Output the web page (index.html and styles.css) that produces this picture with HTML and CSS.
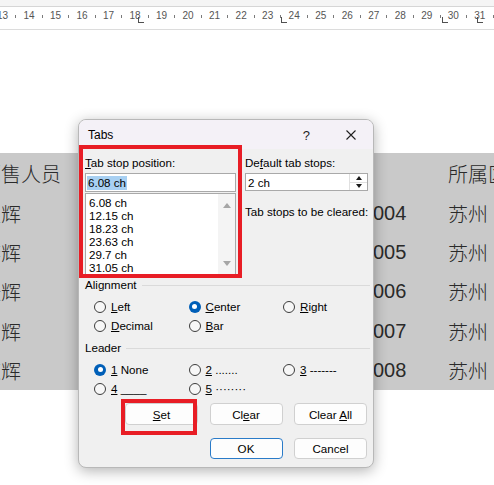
FILE: index.html
```html
<!DOCTYPE html>
<html>
<head>
<meta charset="utf-8">
<title>Tabs</title>
<link rel="stylesheet" href="styles.css">
</head>
<body>
<div class="ruler">
  <div class="ruler-top"></div>
  <div class="scale">
    <div class="nums">
      <span class="n">13</span><i class="tk"></i><span class="n">14</span><i class="tk"></i><span class="n">15</span><i class="tk"></i><span class="n">16</span><i class="tk"></i><span class="n">17</span><i class="tk"></i><span class="n">18</span><i class="tk"></i><span class="n">19</span><i class="tk"></i><span class="n">20</span><i class="tk"></i><span class="n">21</span><i class="tk"></i><span class="n">22</span><i class="tk"></i><span class="n">23</span><i class="tk"></i><span class="n">24</span><i class="tk"></i><span class="n">25</span><i class="tk"></i><span class="n">26</span><i class="tk"></i><span class="n">27</span><i class="tk"></i><span class="n">28</span><i class="tk"></i><span class="n">29</span><i class="tk"></i><span class="n">30</span><i class="tk"></i><span class="n">31</span><i class="tk"></i><span class="n">32</span>
    </div>
    <i class="tabmark t1"></i><i class="tabmark t2"></i><i class="tabmark t3"></i><i class="tabmark t4"></i>
  </div>
</div>

<div class="sheet">
  <div class="c">销售人员</div><div class="c"></div><div class="c">所属区域</div>
  <div class="c">王辉</div><div class="c">004</div><div class="c">苏州</div>
  <div class="c">李辉</div><div class="c">005</div><div class="c">苏州</div>
  <div class="c">张辉</div><div class="c">006</div><div class="c">苏州</div>
  <div class="c">刘辉</div><div class="c">007</div><div class="c">苏州</div>
  <div class="c">陈辉</div><div class="c">008</div><div class="c">苏州</div>
</div>

<div class="dialog">
  <div class="titlebar">
    <span class="title">Tabs</span>
    <span class="help">?</span>
    <span class="close"><svg width="10" height="10" viewBox="0 0 10 10"><path d="M0.5 0.5 L9.5 9.5 M9.5 0.5 L0.5 9.5" stroke="#1f1f1f" stroke-width="1.1" fill="none"/></svg></span>
  </div>
  <div class="dbody">
    <div class="top">
      <div class="col-left">
        <div class="lbl"><u>T</u>ab stop position:</div>
        <div class="edit"><span class="sel">6.08 ch</span></div>
        <div class="list">
          <ul class="items">
            <li>6.08 ch</li>
            <li>12.15 ch</li>
            <li>18.23 ch</li>
            <li>23.63 ch</li>
            <li>29.7 ch</li>
            <li>31.05 ch</li>
          </ul>
          <div class="vscroll"><i class="arr-up"></i><i class="arr-down"></i></div>
        </div>
      </div>
      <div class="col-right">
        <div class="lbl">De<u>f</u>ault tab stops:</div>
        <div class="edit spin-edit">
          <span class="val">2 ch</span>
          <div class="spinner"><span class="sp"><i class="s-up"></i></span><span class="sp"><i class="s-down"></i></span></div>
        </div>
        <div class="lbl clear-lbl">Tab stops to be cleared:</div>
      </div>
    </div>

    <div class="group align-group">
      <div class="gh"><span>Alignment</span><i class="rule"></i></div>
      <div class="radios">
        <label class="rb"><i class="dot"></i><span><u>L</u>eft</span></label>
        <label class="rb"><i class="dot on"></i><span><u>C</u>enter</span></label>
        <label class="rb"><i class="dot"></i><span><u>R</u>ight</span></label>
        <label class="rb"><i class="dot"></i><span><u>D</u>ecimal</span></label>
        <label class="rb"><i class="dot"></i><span><u>B</u>ar</span></label>
      </div>
    </div>

    <div class="group leader-group">
      <div class="gh"><span>Leader</span><i class="rule"></i></div>
      <div class="radios">
        <label class="rb"><i class="dot on"></i><span><u>1</u> None</span></label>
        <label class="rb"><i class="dot"></i><span><u>2</u> .......</span></label>
        <label class="rb"><i class="dot"></i><span><u>3</u> -------</span></label>
        <label class="rb"><i class="dot"></i><span><u>4</u> ____</span></label>
        <label class="rb"><i class="dot"></i><span><u>5</u> ········</span></label>
      </div>
    </div>

    <div class="btnrow first">
      <button class="btn"><u>S</u>et</button>
      <button class="btn">Cl<u>e</u>ar</button>
      <button class="btn">Clear <u>A</u>ll</button>
    </div>
    <div class="btnrow second">
      <button class="btn ok">OK</button>
      <button class="btn">Cancel</button>
    </div>
  </div>
  <div class="mark mark1"></div>
  <div class="mark mark2"></div>
</div>
</body>
</html>
```

FILE: styles.css
```css
html, body {
  margin: 0;
  padding: 0;
}
body {
  width: 494px;
  height: 485px;
  overflow: hidden;
  position: relative;
  background: #ffffff;
  font-family: "Liberation Sans", Arial, sans-serif;
}

/* ---------- ruler ---------- */
.ruler {
  height: 30px;
  background: #f5f5f5;
  display: flex;
  flex-direction: column;
}
.ruler-top {
  height: 6px;
  border-bottom: 1px solid #d6d6d6;
}
.scale {
  position: relative;
  height: 22px;
  background: #ffffff;
  border-bottom: 1px solid #dcdcdc;
  box-sizing: content-box;
}
.nums {
  display: flex;
  align-items: flex-start;
  margin-left: -10.26px;
  padding-top: 3px;
  white-space: nowrap;
}
.n {
  flex: none;
  width: 25.53px;
  text-align: center;
  font-size: 10px;
  line-height: 12px;
  color: #555555;
}
.tk {
  flex: none;
  width: 1px;
  height: 3px;
  margin-top: 5px;
  background: #7a7a7a;
}
.tabmark {
  position: absolute;
  top: 10px;
  width: 5px;
  height: 5px;
  border-left: 1px solid #505050;
  border-bottom: 1px solid #505050;
}
.t1 { left: 138px; }
.t2 { left: 281px; }
.t3 { left: 442px; }
.t4 { left: 477px; }

/* ---------- document table ---------- */
.sheet {
  margin-top: 123px;
  margin-left: -19px;
  display: grid;
  grid-template-columns: 392px 75px 1fr;
  grid-template-rows: 41px repeat(5, 39.2px);
  background: #c9c9c9;
  font-family: "Liberation Sans", "Noto Sans CJK SC", sans-serif;
  font-weight: 300;
  font-size: 20px;
  color: #2a2a2a;
}
.c {
  display: flex;
  align-items: center;
  white-space: nowrap;
  overflow: hidden;
}

/* ---------- dialog ---------- */
.dialog {
  position: absolute;
  left: 78px;
  top: 119px;
  width: 296px;
  height: 349px;
  box-sizing: border-box;
  border: 1px solid #b8b8b8;
  border-radius: 8px;
  background: #f0f0f0;
  box-shadow: 0 3px 14px rgba(0, 0, 0, 0.30);
  overflow: hidden;
  display: flex;
  flex-direction: column;
  font-family: "Liberation Sans", Arial, sans-serif;
  font-size: 11.6px;
  color: #000000;
}
.titlebar {
  height: 29px;
  flex: none;
  display: flex;
  align-items: center;
  background: #f4f1f7;
  padding-left: 9px;
  padding-top: 1px;
  box-sizing: border-box;
}
.title {
  flex: 1;
  font-size: 12px;
}
.help {
  font-size: 13px;
  margin-right: 36px;
  color: #1f1f1f;
}
.close {
  display: flex;
  margin-right: 17px;
}

.dbody {
  flex: 1;
  padding: 0 5px 0 6px;
  display: flex;
  flex-direction: column;
}
.top {
  display: flex;
}
.col-left {
  width: 151px;
  flex: none;
}
.col-right {
  width: 123px;
  flex: none;
  margin-left: 9px;
}
.lbl {
  margin-top: 7px;
  line-height: 14px;
  white-space: nowrap;
}
.edit {
  margin-top: 3px;
  height: 19px;
  box-sizing: border-box;
  border: 1px solid #a9a9a9;
  background: #ffffff;
  display: flex;
  align-items: center;
  padding-left: 1px;
}
.sel {
  background: #a8d0f2;
  line-height: 14px;
  padding: 0 1px 0 1px;
}
.list {
  margin-top: 1px;
  height: 82px;
  box-sizing: border-box;
  border: 1px solid #a9a9a9;
  background: #ffffff;
  display: flex;
}
.items {
  flex: 1;
  list-style: none;
  margin: 0;
  padding: 2px 0 0 3px;
}
.items li {
  line-height: 13px;
}
.vscroll {
  width: 17px;
  background: #f4f4f4;
  display: flex;
  flex-direction: column;
  justify-content: space-between;
  align-items: center;
  padding: 9px 0 8px;
  box-sizing: border-box;
}
.arr-up {
  width: 0;
  height: 0;
  border-left: 4.5px solid transparent;
  border-right: 4.5px solid transparent;
  border-bottom: 5px solid #a6a6a6;
}
.arr-down {
  width: 0;
  height: 0;
  border-left: 4.5px solid transparent;
  border-right: 4.5px solid transparent;
  border-top: 5px solid #a6a6a6;
}
.spin-edit {
  height: 18px;
  padding-left: 2px;
  padding-right: 0;
}
.val {
  flex: 1;
}
.spinner {
  width: 17px;
  height: 100%;
  display: flex;
  flex-direction: column;
  border-left: 1px solid #e0e0e0;
}
.sp {
  flex: 1;
  display: flex;
  align-items: center;
  justify-content: center;
}
.sp + .sp {
  border-top: 1px solid #e0e0e0;
}
.s-up {
  width: 0;
  height: 0;
  border-left: 3.5px solid transparent;
  border-right: 3.5px solid transparent;
  border-bottom: 4px solid #1a1a1a;
}
.s-down {
  width: 0;
  height: 0;
  border-left: 3.5px solid transparent;
  border-right: 3.5px solid transparent;
  border-top: 4px solid #1a1a1a;
}
.clear-lbl {
  margin-top: 14px;
}

/* groups */
.align-group {
  margin-top: 3px;
}
.leader-group {
  margin-top: 6px;
}
.gh {
  display: flex;
  align-items: center;
  line-height: 14px;
}
.rule {
  flex: 1;
  height: 1px;
  background: #dadada;
  margin-left: 5px;
  margin-right: -2px;
}
.radios {
  margin-top: 5px;
  margin-left: 9px;
  display: grid;
  grid-template-columns: 94.5px 94.5px 1fr;
  grid-auto-rows: 19px;
}
.rb {
  display: flex;
  align-items: center;
  white-space: nowrap;
}
.dot {
  width: 12px;
  height: 12px;
  box-sizing: border-box;
  border-radius: 50%;
  border: 1px solid #3c3c3c;
  background: #f7f7f7;
  margin-right: 5px;
  flex: none;
  position: relative;
}
.dot.on {
  border: none;
  background: #005fb8;
}
.dot.on::after {
  content: "";
  position: absolute;
  left: 3.5px;
  top: 3.5px;
  width: 5px;
  height: 5px;
  border-radius: 50%;
  background: #ffffff;
}

/* buttons */
.btnrow {
  display: flex;
  justify-content: flex-end;
  gap: 11.5px;
  padding-right: 1px;
}
.btnrow.first {
  margin-top: 5px;
}
.btnrow.second {
  margin-top: 13px;
}
.btn {
  width: 73px;
  height: 22px;
  box-sizing: border-box;
  border: 1px solid #d0d0d0;
  border-radius: 4px;
  background: #fdfdfd;
  font-family: "Liberation Sans", Arial, sans-serif;
  font-size: 11.6px;
  color: #000000;
  padding: 0;
}
.btnrow.second .btn {
  height: 21px;
}
.btn.ok {
  border-color: #2a7bc8;
}

/* annotation overlays */
.mark {
  position: absolute;
  box-sizing: border-box;
  border: 4px solid #e81d25;
}
.mark1 {
  left: 0;
  top: 25px;
  width: 163px;
  height: 133px;
}
.mark2 {
  left: 42px;
  top: 279px;
  width: 76px;
  height: 36px;
}
```
